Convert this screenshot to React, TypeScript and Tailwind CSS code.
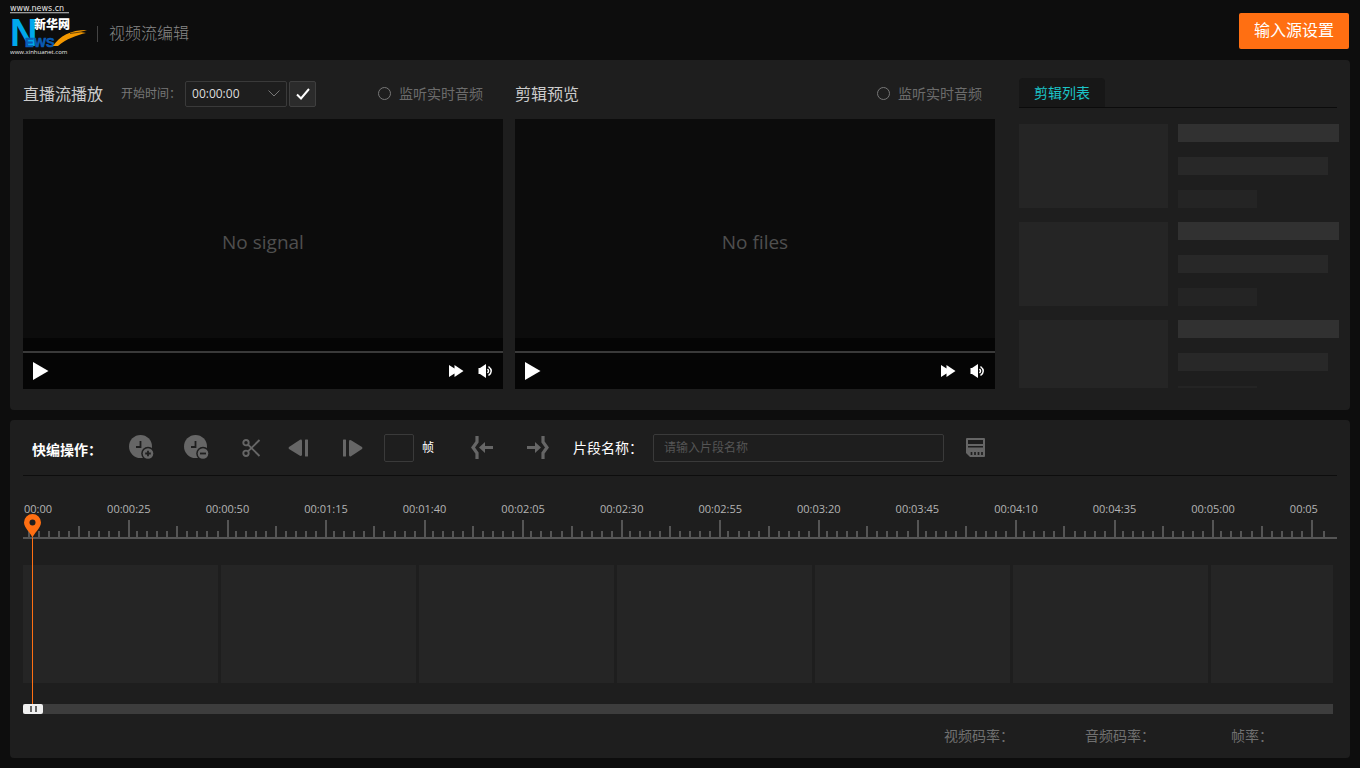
import { useState } from 'react';
import type { ReactNode } from 'react';
import { clsx } from 'clsx';

const RULER_LABELS = [
  '00:00', '00:00:25', '00:00:50', '00:01:15', '00:01:40', '00:02:05', '00:02:30',
  '00:02:55', '00:03:20', '00:03:45', '00:04:10', '00:04:35', '00:05:00', '00:05',
];

function Logo() {
  return (
    <svg width="78" height="52" viewBox="0 -1 78 52" role="img" aria-label="新华网">
      <text x="0" y="6" fontSize="8" fill="#e6e6e6" fontFamily="DejaVu Sans, sans-serif">www.news.cn</text>
      <rect x="0" y="7" width="59" height="1" fill="#9a9a9a" />
      <rect x="0" y="8" width="59" height="1" fill="#3c3c3c" />
      <text x="0" y="41" fontSize="38" fontWeight="700" fill="#00a8ec" fontFamily="Liberation Sans Narrow, Liberation Sans, sans-serif">N</text>
      <text x="24" y="24" fontSize="12" fontWeight="900" fill="#ffffff" fontFamily="Noto Sans CJK SC, sans-serif">新华网</text>
      <text x="15" y="42" fontSize="13" fontWeight="700" fill="#0a5cb4" stroke="#0a5cb4" strokeWidth="0.600" fontFamily="Liberation Sans Narrow, Liberation Sans, sans-serif">EWS</text>
      <path d="M43 41 C50 31 60 25 77 25 L71 27 L76 28 C67 30 56 34 48 41 Z" fill="#f39800" />
      <path d="M60 28.500 L74 26.500" stroke="#0d0d0d" strokeWidth="0.600" />
      <text x="0" y="49" fontSize="6" fill="#e6e6e6" fontFamily="Open Sans, sans-serif">www.xinhuanet.com</text>
    </svg>
  );
}

function AudioMonitor() {
  return (
    <label className="flex items-center gap-2 text-sm text-[#6b6b6b]">
      <input type="checkbox" className="size-[13px] appearance-none rounded-full border border-[#777] checked:bg-[#777]" />
      监听实时音频
    </label>
  );
}

function Player({ message, children }: { message: string; children: ReactNode }) {
  return (
    <section className="min-w-0 flex-1">
      <div className="mb-0.5 flex h-[47px] items-center">{children}</div>
      <div className="flex h-[219px] items-center justify-center bg-[#0c0c0c] pt-7 text-[19px] text-[#4f4f4f]">
        {message}
      </div>
      <div className="bg-[#050505] pt-[13px]">
        <input
          type="range"
          defaultValue={0}
          aria-label="播放进度"
          className="block h-0.5 w-full appearance-none bg-[#3a3a3a] [&::-webkit-slider-thumb]:size-0 [&::-webkit-slider-thumb]:appearance-none"
        />
        <div className="flex h-9 items-center px-2.5 text-white">
          <button aria-label="播放">
            <svg width="16" height="18" viewBox="0 0 16 18" fill="currentColor"><path d="M0 0 L15.500 9 L0 18 Z" /></svg>
          </button>
          <button aria-label="快进" className="ml-auto">
            <svg width="15" height="12" viewBox="0 0 15 12" fill="currentColor"><path d="M0 0 L5.500 3.500 V0 L14.500 6 L5.500 12 V8.500 L0 12 Z" /></svg>
          </button>
          <button aria-label="音量" className="ml-3.5">
            <svg width="15" height="14" viewBox="0 0 15 14" fill="currentColor">
              <path d="M0.500 4 H2 L8 0 V14 L2 10 H0.500 Z" />
              <path d="M9.500 5 Q11.500 7 9.500 9 M10.500 2.500 Q16 7 10.500 11.500" fill="none" stroke="currentColor" strokeWidth="1.500" />
            </svg>
          </button>
        </div>
      </div>
    </section>
  );
}

function ClipList() {
  return (
    <aside className="w-80 shrink-0">
      <div className="mr-0.5 flex h-[38px] items-end border-b border-[#0b0b0b]">
        <button className="h-[29px] w-[86px] rounded-t-sm bg-[#171717] text-sm text-[#1bc5c7]">剪辑列表</button>
      </div>
      <ul className="mt-4 flex h-[264px] flex-col gap-3.5 overflow-hidden">
        {[0, 1, 2].map((i) => (
          <li key={i} className="flex shrink-0 gap-2.5">
            <div className="h-[84px] w-[149px] bg-[#252525]" />
            <div className="flex flex-1 flex-col justify-between">
              <div className="h-[18px] bg-[#313131]" />
              <div className="h-[18px] w-[150px] bg-[#282828]" />
              <div className="h-[18px] w-[79px] bg-[#242424]" />
            </div>
          </li>
        ))}
      </ul>
    </aside>
  );
}

function ClockIcon({ minus }: { minus?: boolean }) {
  return (
    <svg width="25" height="25" viewBox="0 0 25 25">
      <circle cx="11.500" cy="11.500" r="11.500" fill="#666" />
      <path d="M11.500 6 V12 H7" fill="none" stroke="#1e1e1e" strokeWidth="1.800" />
      <circle cx="19" cy="18.500" r="6.800" fill="#1e1e1e" />
      <circle cx="19" cy="18.500" r="5.300" fill="#666" />
      <path d={minus ? 'M16 18.500 H22' : 'M16.200 18.500 H21.800 M19 15.700 V21.300'} stroke="#1e1e1e" strokeWidth="1.800" />
    </svg>
  );
}

function ScissorsIcon() {
  return (
    <svg width="19" height="18" viewBox="0 0 19 18" fill="none" stroke="#666" strokeWidth="1.900">
      <circle cx="4" cy="3.700" r="2.700" />
      <circle cx="4" cy="14.300" r="2.700" />
      <path d="M6 5.600 L17.500 17 M6 12.400 L17.500 1" />
    </svg>
  );
}

function StepIcon({ forward }: { forward?: boolean }) {
  return (
    <svg width="20" height="18" viewBox="0 0 20 18" fill="#666" className={clsx(forward && 'rotate-180')}>
      <path d="M1 8 L12 0.700 Q14 0 14 2 V15.500 Q14 17.500 12 16.800 L1 10 Q0 9 1 8 Z" />
      <rect x="17" y="0.500" width="3" height="17" rx="0.500" />
    </svg>
  );
}

function CutPointIcon({ out }: { out?: boolean }) {
  return (
    <svg width="22" height="23" viewBox="0 0 22 23" className={clsx(out && 'rotate-180')}>
      <path d="M6 0 V6 L2 11.500 L6 17 V23" fill="none" stroke="#666" strokeWidth="3.200" />
      <path d="M8 11.500 L14 6 V10 H22 V13 H14 V17 Z" fill="#666" />
    </svg>
  );
}

function SaveIcon() {
  return (
    <svg width="19" height="19" viewBox="0 0 19 19">
      <path d="M1 0 H18 Q19 0 19 1 V18 Q19 19 18 19 H4 L0 15 V1 Q0 0 1 0 Z" fill="#666" />
      <rect x="2" y="2" width="15" height="4" fill="#1e1e1e" />
      <rect x="2" y="8" width="15" height="1.500" fill="#1e1e1e" />
      <path d="M5.500 14 V17 M9 14 V17 M12.500 14 V17 M16 14 V17" stroke="#1e1e1e" strokeWidth="1.700" />
    </svg>
  );
}

function Toolbar() {
  return (
    <div className="flex h-14 items-center border-b border-[#0d0d0d] pl-[9px] text-sm text-white">
      <span className="w-[97px] pt-1 font-bold">快编操作：</span>
      <button aria-label="增加时间"><ClockIcon /></button>
      <button aria-label="减少时间" className="ml-[30px]"><ClockIcon minus /></button>
      <button aria-label="剪切" className="ml-[33px]"><ScissorsIcon /></button>
      <button aria-label="上一帧" className="ml-[27px]"><StepIcon /></button>
      <button aria-label="下一帧" className="ml-[35px]"><StepIcon forward /></button>
      <label className="ml-[21px] flex items-center gap-2 text-xs">
        <input type="text" className="h-7 w-[30px] rounded-xs border border-[#3a3a3a] text-center" />
        帧
      </label>
      <button aria-label="设为入点" className="ml-[37px]"><CutPointIcon /></button>
      <button aria-label="设为出点" className="ml-[34px]"><CutPointIcon out /></button>
      <label className="ml-6 flex items-center">
        <span className="w-20">片段名称：</span>
        <input
          type="text"
          placeholder="请输入片段名称"
          className="h-7 w-[291px] rounded-xs border border-[#3a3a3a] px-2.5 text-xs placeholder:text-[#555]"
        />
      </label>
      <button aria-label="保存" className="ml-[22px]"><SaveIcon /></button>
    </div>
  );
}

function Tick({ index }: { index: number }) {
  const height = index === 0 ? 'h-[17px]' : index === 5 ? 'h-[11px]' : 'h-1.5';
  return <div className={clsx('w-0.5 bg-[#555]', height)} />;
}

function Ruler() {
  return (
    <div className="flex h-[21px] items-end border-b-2 border-[#555]">
      <div className="flex items-end pl-[5px]">
        {Array.from({ length: 10 }, (_, i) => (
          <div key={i} className="w-2.5"><Tick index={i || 1} /></div>
        ))}
      </div>
      {Array.from({ length: 12 }, (_, g) => (
        <div key={g} className="flex flex-1 items-end">
          {Array.from({ length: 10 }, (_, i) => (
            <div key={i} className={i === 0 ? 'w-2' : 'flex-1'}><Tick index={i} /></div>
          ))}
        </div>
      ))}
      <div className="flex w-[26px] items-end gap-2.5">
        <Tick index={0} />
        <Tick index={1} />
      </div>
    </div>
  );
}

function Timeline() {
  return (
    <div className="relative pt-6">
      <div className="flex h-[18px] items-center justify-between pr-[19px] pl-px text-[11px] text-[#b4b4b4]">
        {RULER_LABELS.map((label) => (
          <span key={label}>{label}</span>
        ))}
      </div>
      <Ruler />
      <div className="mt-[26px] mr-1 flex h-[118px] gap-[3px]">
        {Array.from({ length: 7 }, (_, i) => (
          <div key={i} className="w-[195px] shrink-0 bg-[#252525] last:w-auto last:flex-1" />
        ))}
      </div>
      <div className="mt-[21px] mr-1">
        <input
          type="range"
          defaultValue={0}
          aria-label="时间轴位置"
          className="block h-2.5 w-full appearance-none bg-[#3d3d3d] [&::-webkit-slider-thumb]:h-2.5 [&::-webkit-slider-thumb]:w-5 [&::-webkit-slider-thumb]:appearance-none [&::-webkit-slider-thumb]:rounded-xs [&::-webkit-slider-thumb]:bg-[#f0f0f0] [&::-webkit-slider-thumb]:bg-[linear-gradient(90deg,transparent_7px,#666_7px,#666_9px,transparent_9px,transparent_12px,#666_12px,#666_14px,transparent_14px)] [&::-webkit-slider-thumb]:bg-[length:20px_6px] [&::-webkit-slider-thumb]:bg-center [&::-webkit-slider-thumb]:bg-no-repeat"
        />
      </div>
      {/* Cabezal de reproducción */}
      <div className="pointer-events-none absolute top-[38px] bottom-2.5 left-px flex w-[17px] flex-col items-center">
        <svg width="17" height="24" viewBox="0 0 17 24" className="shrink-0">
          <path d="M8.500 24 C7 19 0 14 0 8.500 A8.500 8.500 0 0 1 17 8.500 C17 14 10 19 8.500 24 Z" fill="#ff6f12" />
          <circle cx="8.500" cy="8.500" r="3" fill="#1e1e1e" />
        </svg>
        <div className="w-px flex-1 bg-[#ff6f12]" />
      </div>
    </div>
  );
}

export default function App() {
  const [startTime, setStartTime] = useState('00:00:00');

  return (
    <div className="min-h-screen bg-[#0d0d0d] px-2.5 pb-2.5 font-['Open_Sans','Noto_Sans_CJK_SC',sans-serif]">
      <header className="flex h-[60px] items-center">
        <Logo />
        <div className="mt-2 ml-[9px] h-4 w-px bg-[#444]" />
        <h1 className="ml-[11px] pt-1.5 text-base font-light text-[#888]">视频流编辑</h1>
        <button className="mt-0.5 mr-px ml-auto h-9 rounded-xs bg-[#ff6f12] px-[15px] pb-0.5 text-base leading-none text-white">
          输入源设置
        </button>
      </header>

      <main className="flex flex-col gap-2.5">
        <div className="flex gap-6 rounded-sm bg-[#1e1e1e] pt-2.5 pr-[11px] pb-[21px] pl-[13px]">
          <div className="flex min-w-0 flex-1 gap-3">
            <Player message="No signal">
              <h2 className="text-base text-[#ccc]">直播流播放</h2>
              <label className="ml-[18px] flex items-center text-xs text-[#777]">
                <span className="w-16">开始时间：</span>
                <span className="relative flex items-center">
                  <select
                    value={startTime}
                    onChange={(e) => setStartTime(e.target.value)}
                    className="h-[26px] w-[102px] appearance-none rounded-xs border border-[#3a3a3a] bg-[#1e1e1e] px-1.5 text-xs text-[#ddd]"
                  >
                    <option>00:00:00</option>
                  </select>
                  <svg width="12" height="7" viewBox="0 0 12 7" fill="none" stroke="#777" className="pointer-events-none absolute right-[7px]">
                    <path d="M0.500 0.500 L6 6 L11.500 0.500" />
                  </svg>
                </span>
              </label>
              <button aria-label="确定" className="ml-0.5 flex h-[26px] w-[27px] items-center justify-center rounded-xs border border-[#3f3f3f] bg-[#2b2b2b]">
                <svg width="14" height="12" viewBox="0 0 14 12" fill="none" stroke="#fff" strokeWidth="2">
                  <path d="M1 6.500 L5 10.500 L13 1" />
                </svg>
              </button>
              <div className="mr-5 ml-auto"><AudioMonitor /></div>
            </Player>
            <Player message="No files">
              <h2 className="text-base text-[#ccc]">剪辑预览</h2>
              <div className="mr-[13px] ml-auto"><AudioMonitor /></div>
            </Player>
          </div>
          <ClipList />
        </div>

        <div className="rounded-sm bg-[#1e1e1e] pr-[13px] pb-3 pl-[13px]">
          <Toolbar />
          <Timeline />
          <dl className="mt-3 mr-16 flex justify-end text-sm text-[#707070]">
            <dt className="w-[141px]">视频码率：</dt>
            <dt className="w-[146px]">音频码率：</dt>
            <dt>帧率：</dt>
          </dl>
        </div>
      </main>
    </div>
  );
}
